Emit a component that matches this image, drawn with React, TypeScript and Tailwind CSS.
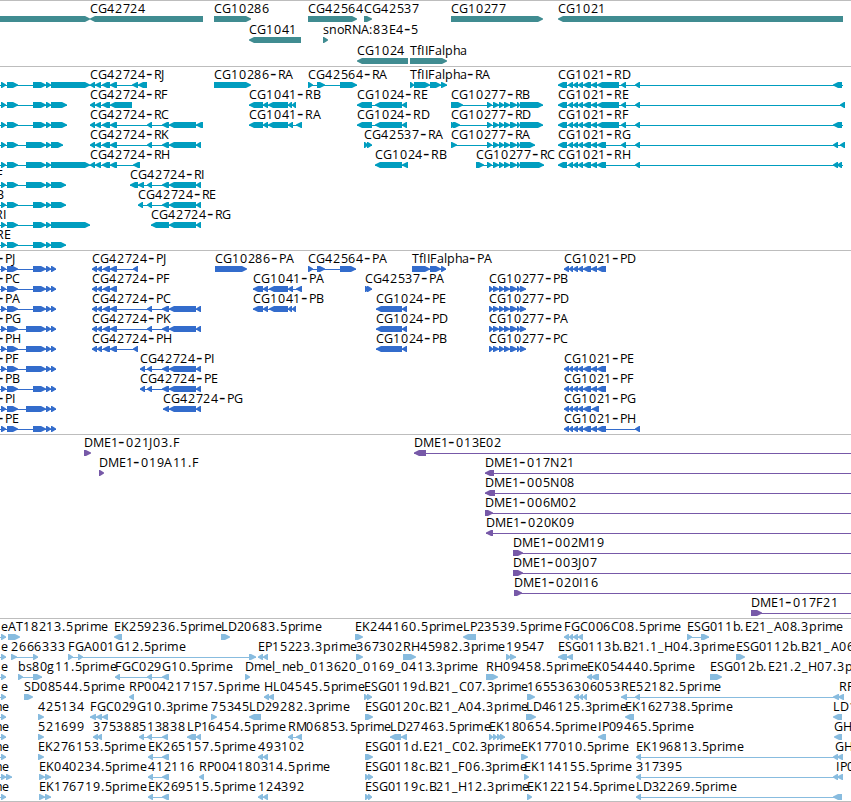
type Strand = "+" | "-";
// row, label, strand, exons, end of the connecting line, label x
type Feature = [number, string, Strand, string, number?, number?];

type Track = {
  id: string;
  height: string;
  color: string;
  pitch: number;
  features: Feature[];
};

// repeated exon groups
const A = "90-95 95-101 102-110 110-117";
const PA = "92-97 97-102 103-110 110-117";
const TAIL = "162-169 169-196 196-201";
const MID = "487-492 493-499 499-504 504-510 510-517 517-520";
const CODING = "489-493 493-499 499-504 504-510 510-517 517-520 520-526";
const C1021 = "558-567 568-573 573-578 578-583 583-591";
const P1021 = "564-569 569-573 573-578 578-583 583-591";

const genes: Feature[] = [
  [0, "", "+", "0-90"],
  [0, "CG42724", "-", "90-203"],
  [0, "CG10286", "+", "214-251"],
  [0, "CG42564", "+", "308-357"],
  [0, "CG42537", "+", "364-372"],
  [0, "CG10277", "+", "451-543"],
  [0, "CG1021", "-", "558-843"],
  [1, "CG1041", "-", "249-301"],
  [1, "snoRNA:83E4-5", "+", "323-328"],
  [2, "CG1024", "-", "357-408"],
  [2, "TfIIFalpha", "+", "410-447"],
];

const transcripts: Feature[] = [
  [0, "", "+", "0-1 1-6 7-18 33-46 46-51 51-90"],
  [1, "", "+", "0-1 1-6 7-18 33-46 46-51 51-67"],
  [2, "", "+", "0-1 1-6 7-18 33-46 46-51 51-67"],
  [3, "", "+", "0-1 1-6 7-18 26-46 46-51 51-63"],
  [4, "", "+", "0-1 1-6 7-18 26-46 46-51 51-90"],
  [5, "F", "+", "0-1 1-6 7-18 26-46 46-51 51-66", 0, -4],
  [6, "B", "+", "0-1 1-6 7-18 33-46 46-51 51-66", 0, -4],
  [7, "RI", "+", "0-1 1-6 7-18 33-46 46-51 51-90", 0, -5],
  [8, "RE", "+", "0-1 1-6 7-18 33-46 46-51 51-66", 0, -4],
  [0, "CG42724-RJ", "-", `${A} 132-138 138-147`],
  [1, "CG42724-RF", "-", "90-95 95-101 102-110 110-132"],
  [2, "CG42724-RC", "-", `${A} 147-152 162-169 169-196 196-203`],
  [3, "CG42724-RK", "-", `${A} 147-152 ${TAIL}`],
  [4, "CG42724-RH", "-", `${A} 133-140`],
  [5, "CG42724-RI", "-", `130-138 138-144 147-152 ${TAIL}`],
  [6, "CG42724-RE", "-", `138-143 147-152 ${TAIL}`],
  [7, "CG42724-RG", "-", "151-169 169-196 196-201"],
  [0, "CG10286-RA", "+", "214-251"],
  [1, "CG1041-RB", "-", "249-263 263-268 268-288 288-292 292-296"],
  [2, "CG1041-RA", "-", "249-263 263-268 268-288 288-293 296-302"],
  [0, "CG42564-RA", "+", "308-313 317-325 340-357"],
  [1, "CG1024-RE", "-", "357-372 375-402 402-407"],
  [2, "CG1024-RD", "-", "357-372 375-402 402-407"],
  [3, "CG42537-RA", "+", "364-368 367-372"],
  [4, "CG1024-RB", "-", "375-402 402-408"],
  [0, "TfIIFalpha-RA", "+", "410-414 414-430 430-441 441-447"],
  [1, "CG10277-RB", "+", `451-463 ${MID} 520-543`],
  [2, "CG10277-RD", "+", `451-455 453-460 ${MID} 520-543`],
  [3, "CG10277-RA", "+", `451-457 ${MID} 520-535`],
  [4, "CG10277-RC", "+", `476-484 ${MID} 520-544`],
  [0, "CG1021-RD", "-", `${C1021} 591-597 597-619 621-626 635-640 833-842`, 843],
  [1, "CG1021-RE", "-", `${C1021} 591-597 597-619 621-626 635-640 840-845`],
  [2, "CG1021-RF", "-", `${C1021} 591-597 597-619 621-626 635-640 833-842`, 843],
  [3, "CG1021-RG", "-", `${C1021} 591-597 597-606 621-626 635-640 833-838 840-845`],
  [4, "CG1021-RH", "-", `${C1021} 591-597 597-606 635-640 833-838 837-842`, 843],
];

const proteins: Feature[] = [
  [0, "-PJ", "+", "0-1 1-6 7-18 33-46 46-51 51-56", 0, -3],
  [1, "-PC", "+", "0-1 1-6 7-18 33-46 46-51 51-56", 0, -3],
  [2, "-PA", "+", "0-1 1-6 7-18 33-46 46-51 51-56", 0, -3],
  [3, "-PG", "+", "0-1 1-6 7-18 26-46 46-51 51-56", 0, -3],
  [4, "-PH", "+", "0-1 1-6 7-18 26-46 46-51 51-56", 0, -3],
  [5, "-PF", "+", "0-1 1-6 7-18 26-46 46-51 51-56", 0, -3],
  [6, "-PB", "+", "0-1 1-6 7-18 33-46 46-51 51-56", 0, -3],
  [7, "-PI", "+", "0-1 1-6 7-18 26-46 46-51 51-56", 0, -3],
  [8, "-PE", "+", "0-1 1-6 7-18 33-46 46-51 51-56", 0, -3],
  [0, "CG42724-PJ", "-", `${PA} 133-138`],
  [1, "CG42724-PF", "-", PA],
  [2, "CG42724-PC", "-", `${PA} 147-152 ${TAIL}`],
  [3, "CG42724-PK", "-", `${PA} 147-152 ${TAIL}`],
  [4, "CG42724-PH", "-", `${PA} 133-138`],
  [5, "CG42724-PI", "-", `140-145 147-152 ${TAIL}`],
  [6, "CG42724-PE", "-", `140-145 147-152 ${TAIL}`],
  [7, "CG42724-PG", "-", "163-169 169-196 196-201"],
  [0, "CG10286-PA", "+", "215-247"],
  [1, "CG1041-PA", "-", "253-263 263-268 269-288 288-293 296-302"],
  [2, "CG1041-PB", "-", "253-263 263-268 269-288 288-292 292-296"],
  [0, "CG42564-PA", "+", "308-313 317-325 340-356"],
  [1, "CG42537-PA", "+", "365-369 367-372"],
  [2, "CG1024-PE", "-", "376-402 402-407"],
  [3, "CG1024-PD", "-", "376-402 402-407"],
  [4, "CG1024-PB", "-", "376-402 402-407"],
  [0, "TfIIFalpha-PA", "+", "412-430 430-441 441-446"],
  [1, "CG10277-PB", "+", CODING],
  [2, "CG10277-PD", "+", CODING],
  [3, "CG10277-PA", "+", CODING],
  [4, "CG10277-PC", "+", CODING],
  [0, "CG1021-PD", "-", `${P1021} 591-597 597-606`],
  [5, "CG1021-PE", "-", `${P1021} 591-597 597-606`],
  [6, "CG1021-PF", "-", `${P1021} 591-597 597-606`],
  [7, "CG1021-PG", "-", `${P1021} 592-599`],
  [8, "CG1021-PH", "-", `${P1021} 591-597 597-606 635-640`],
];

const clones: Feature[] = [
  [0, "DME1-021J03.F", "+", "84-91"],
  [1, "DME1-019A11.F", "+", "99-104"],
  [0, "DME1-013E02", "-", "414-426", 851],
  [1, "DME1-017N21", "-", "485-494", 851],
  [2, "DME1-005N08", "-", "485-495", 851],
  [3, "DME1-006M02", "+", "485-493", 851],
  [4, "DME1-020K09", "-", "486-493", 851],
  [5, "DME1-002M19", "+", "513-523", 851],
  [6, "DME1-003J07", "+", "513-523", 851],
  [7, "DME1-020I16", "+", "514-522", 851],
  [8, "DME1-017F21", "+", "751-762", 851],
];

const ests: Feature[] = [
  [0, "e", "+", "0-1 1-6", 0, 1],
  [1, "e", "+", "0-1 1-6", 0, 1],
  [2, "e", "+", "0-1 1-6", 0, 1],
  [3, "e", "+", "0-1 1-6", 0, 1],
  [4, "me", "+", "0-1 1-6", 0, -9],
  [5, "me", "+", "0-1 1-6", 0, -9],
  [6, "me", "+", "0-1 1-6", 0, -9],
  [7, "me", "+", "0-1 1-6 6-12", 0, -9],
  [8, "me", "+", "0-1 1-6", 0, -9],
  [0, "AT18213.5prime", "+", "8-20"],
  [0, "EK259236.5prime", "-", "114-122"],
  [0, "LD20683.5prime", "+", "221-230"],
  [0, "EK244160.5prime", "+", "355-363"],
  [0, "LP23539.5prime", "-", "463-476"],
  [0, "FGC006C08.5prime", "-", "564-569 569-573 573-578 578-583"],
  [0, "ESG011b.E21_A08.3prime", "+", "687-692 701-709"],
  [1, "2666333", "+", "11-17 33-38"],
  [1, "FGA001G12.5prime", "+", "68-73 78-83 249-256"],
  [1, "EP15223.3prime", "-", "258-263 263-268"],
  [1, "367302", "+", "356-363"],
  [1, "RH45982.3prime", "+", "403-416"],
  [1, "19547", "+", "506-511 510-516"],
  [1, "ESG0113b.B21.1_H04.3prime", "-", "558-567 567-573"],
  [1, "ESG0112b.B21_A06.3prime", "+", "736-745"],
  [2, "bs80g11.5prime", "+", "18-23 33-42"],
  [2, "FGC029G10.5prime", "-", "115-120 147-152 162-169"],
  [2, "Dmel_neb_013620_0169_0413.3prime", "+", "245-250"],
  [2, "RH09458.5prime", "+", "486-498"],
  [2, "EK054440.5prime", "-", "587-592 591-599"],
  [2, "ESG012b.E21.2_H07.3prime", "+", "710-722"],
  [3, "SD08544.5prime", "+", "24-33"],
  [3, "RP004217157.5prime", "-", "129-134"],
  [3, "HL04545.5prime", "-", "264-269 268-274"],
  [3, "ESG0119d.B21_C07.3prime", "+", "364-368 367-372"],
  [3, "165536", "+", "527-535"],
  [3, "306053", "-", "574-579 579-583 583-587"],
  [3, "RE52182.5prime", "-", "621-627 635-640 833-839"],
  [3, "RF", "-", "838-844", 0, 839],
  [4, "425134", "+", "38-44"],
  [4, "FGC029G10.3prime", "-", "90-96 96-102 102-108"],
  [4, "75345", "+", "211-217"],
  [4, "LD29282.3prime", "-", "249-261"],
  [4, "ESG0120c.B21_A04.3prime", "+", "365-373"],
  [4, "LD46125.3prime", "+", "526-536"],
  [4, "EK162738.5prime", "-", "625-634"],
  [4, "LD1", "-", "833-842"],
  [5, "521699", "+", "38-44"],
  [5, "375388", "-", "93-98 97-102"],
  [5, "513838", "-", "139-144 147-152 162-168"],
  [5, "LP16454.5prime", "-", "187-196 196-201"],
  [5, "RM06853.5prime", "-", "288-293 296-302"],
  [5, "LD27463.5prime", "-", "390-401 401-407"],
  [5, "EK180654.5prime", "+", "489-493 493-497 497-501 500-505"],
  [5, "IP09465.5prime", "-", "598-606"],
  [5, "GH", "-", "834-842"],
  [6, "EK276153.5prime", "+", "38-44"],
  [6, "EK265157.5prime", "-", "148-153 162-169"],
  [6, "493102", "-", "258-263 263-268"],
  [6, "ESG011d.E21_C02.3prime", "+", "365-373"],
  [6, "EK177010.5prime", "+", "521-528"],
  [6, "EK196813.5prime", "-", "636-641 833-838"],
  [6, "GH", "-", "837-843", 0, 835],
  [7, "EK040234.5prime", "+", "39-45 45-51"],
  [7, "412116", "-", "148-153 162-169"],
  [7, "RP004180314.5prime", "-", "199-204"],
  [7, "ESG0118c.B21_F06.3prime", "+", "365-369 368-373"],
  [7, "EK114155.5prime", "+", "524-529"],
  [7, "317395", "-", "636-641 833-838"],
  [7, "IP0", "-", "837-843", 0, 836],
  [8, "EK176719.5prime", "+", "39-45 45-51"],
  [8, "EK269515.5prime", "-", "148-153 162-169"],
  [8, "124392", "-", "258-263 263-268"],
  [8, "ESG0119c.B21_H12.3prime", "+", "365-369 368-372"],
  [8, "EK122154.5prime", "+", "527-532"],
  [8, "LD32269.5prime", "-", "636-641 833-842"],
];

const tracks: Track[] = [
  { id: "genes", height: "h-[66px]", color: "#408c91", pitch: 21, features: genes },
  { id: "transcripts", height: "h-[184px]", color: "#009dbf", pitch: 20, features: transcripts },
  { id: "proteins", height: "h-[184px]", color: "#336ccc", pitch: 20, features: proteins },
  { id: "clones", height: "h-[184px]", color: "#7759a8", pitch: 20, features: clones },
  { id: "ests", height: "h-[183px]", color: "#88bcdf", pitch: 20, features: ests },
];

// label glyph advances in pixels, digits and anything missing use 7.8
const advances: Record<string, number> = {
  A: 8.2, B: 7.2, C: 8.2, D: 9, E: 7, F: 6.7, G: 8.8, H: 9, I: 3.6, J: 4, K: 7.8, L: 6.6, M: 10.6,
  N: 9.2, P: 7, R: 7.8, S: 6.7, T: 6.8, a: 6.8, b: 7.6, c: 6.2, d: 7.6, e: 6.9, f: 4.2, g: 7.6,
  h: 7.5, i: 3.5, l: 3.4, m: 11.2, n: 7.5, o: 7.5, p: 7.6, r: 4.8, s: 6.2, "-": 7.6, ".": 4.1,
  "_": 6.4, ":": 4,
};

function glyphPositions(label: string, start: number) {
  let x = start;
  return [...label]
    .map((ch) => {
      const at = Math.round(x);
      x += advances[ch] ?? 7.8;
      return at;
    })
    .join(" ");
}

function arrow(a: number, b: number, y: number, strand: Strand) {
  const head = Math.min(b - a, 6);
  const mid = y + 3;
  if (strand === "+") {
    return `M${a} ${y}H${b - head + 1}L${b} ${mid - 0.4}V${mid + 0.4}L${b - head + 1} ${y + 6}H${a}Z`;
  }
  return `M${b} ${y}H${a + head - 1}L${a} ${mid - 0.4}V${mid + 0.4}L${a + head - 1} ${y + 6}H${b}Z`;
}

function FeatureGlyph({ feature, pitch, color }: { feature: Feature; pitch: number; color: string }) {
  const [row, label, strand, exonText, lineEnd, labelX] = feature;
  const exons = exonText.split(" ").map((e) => e.split("-").map(Number));
  const y = 16 + row * pitch;
  const start = exons[0][0];
  const end = lineEnd || exons[exons.length - 1][1];

  return (
    <g>
      {(exons.length > 1 || lineEnd) && (
        <rect x={start} y={y + 3} width={end - start} height={1} fill={color} />
      )}
      {exons.map(([a, b], i) =>
        b - a > 1 ? <path key={i} d={arrow(a, b, y, strand)} fill={color} /> : null
      )}
      {label && (
        <text x={glyphPositions(label, labelX ?? start)} y={y - 3} fill="#000">
          {/* the hyphen is set larger, it is short in this font */}
          {label.split(/(-)/).map((part, i) =>
            part === "-" ? (
              <tspan key={i} className="font-['DejaVu_Sans',sans-serif] text-[18px]">
                -
              </tspan>
            ) : (
              part
            )
          )}
        </text>
      )}
    </g>
  );
}

export default function App() {
  return (
    <main className="flex h-[802px] w-[851px] flex-col overflow-hidden bg-white">
      {tracks.map((track) => (
        <section key={track.id} className={`${track.height} shrink-0 border-t border-[#bdbdbd]`}>
          <svg
            viewBox={`0 1 851 ${track.pitch === 21 ? 65 : 183}`}
            width={851}
            height={track.pitch === 21 ? 65 : 183}
            className="block font-['Open_Sans',sans-serif] text-[12.5px]"
          >
            {track.features.map((feature, i) => (
              <FeatureGlyph key={i} feature={feature} pitch={track.pitch} color={track.color} />
            ))}
          </svg>
        </section>
      ))}
      <div className="h-px shrink-0 bg-[#bdbdbd]" />
    </main>
  );
}
